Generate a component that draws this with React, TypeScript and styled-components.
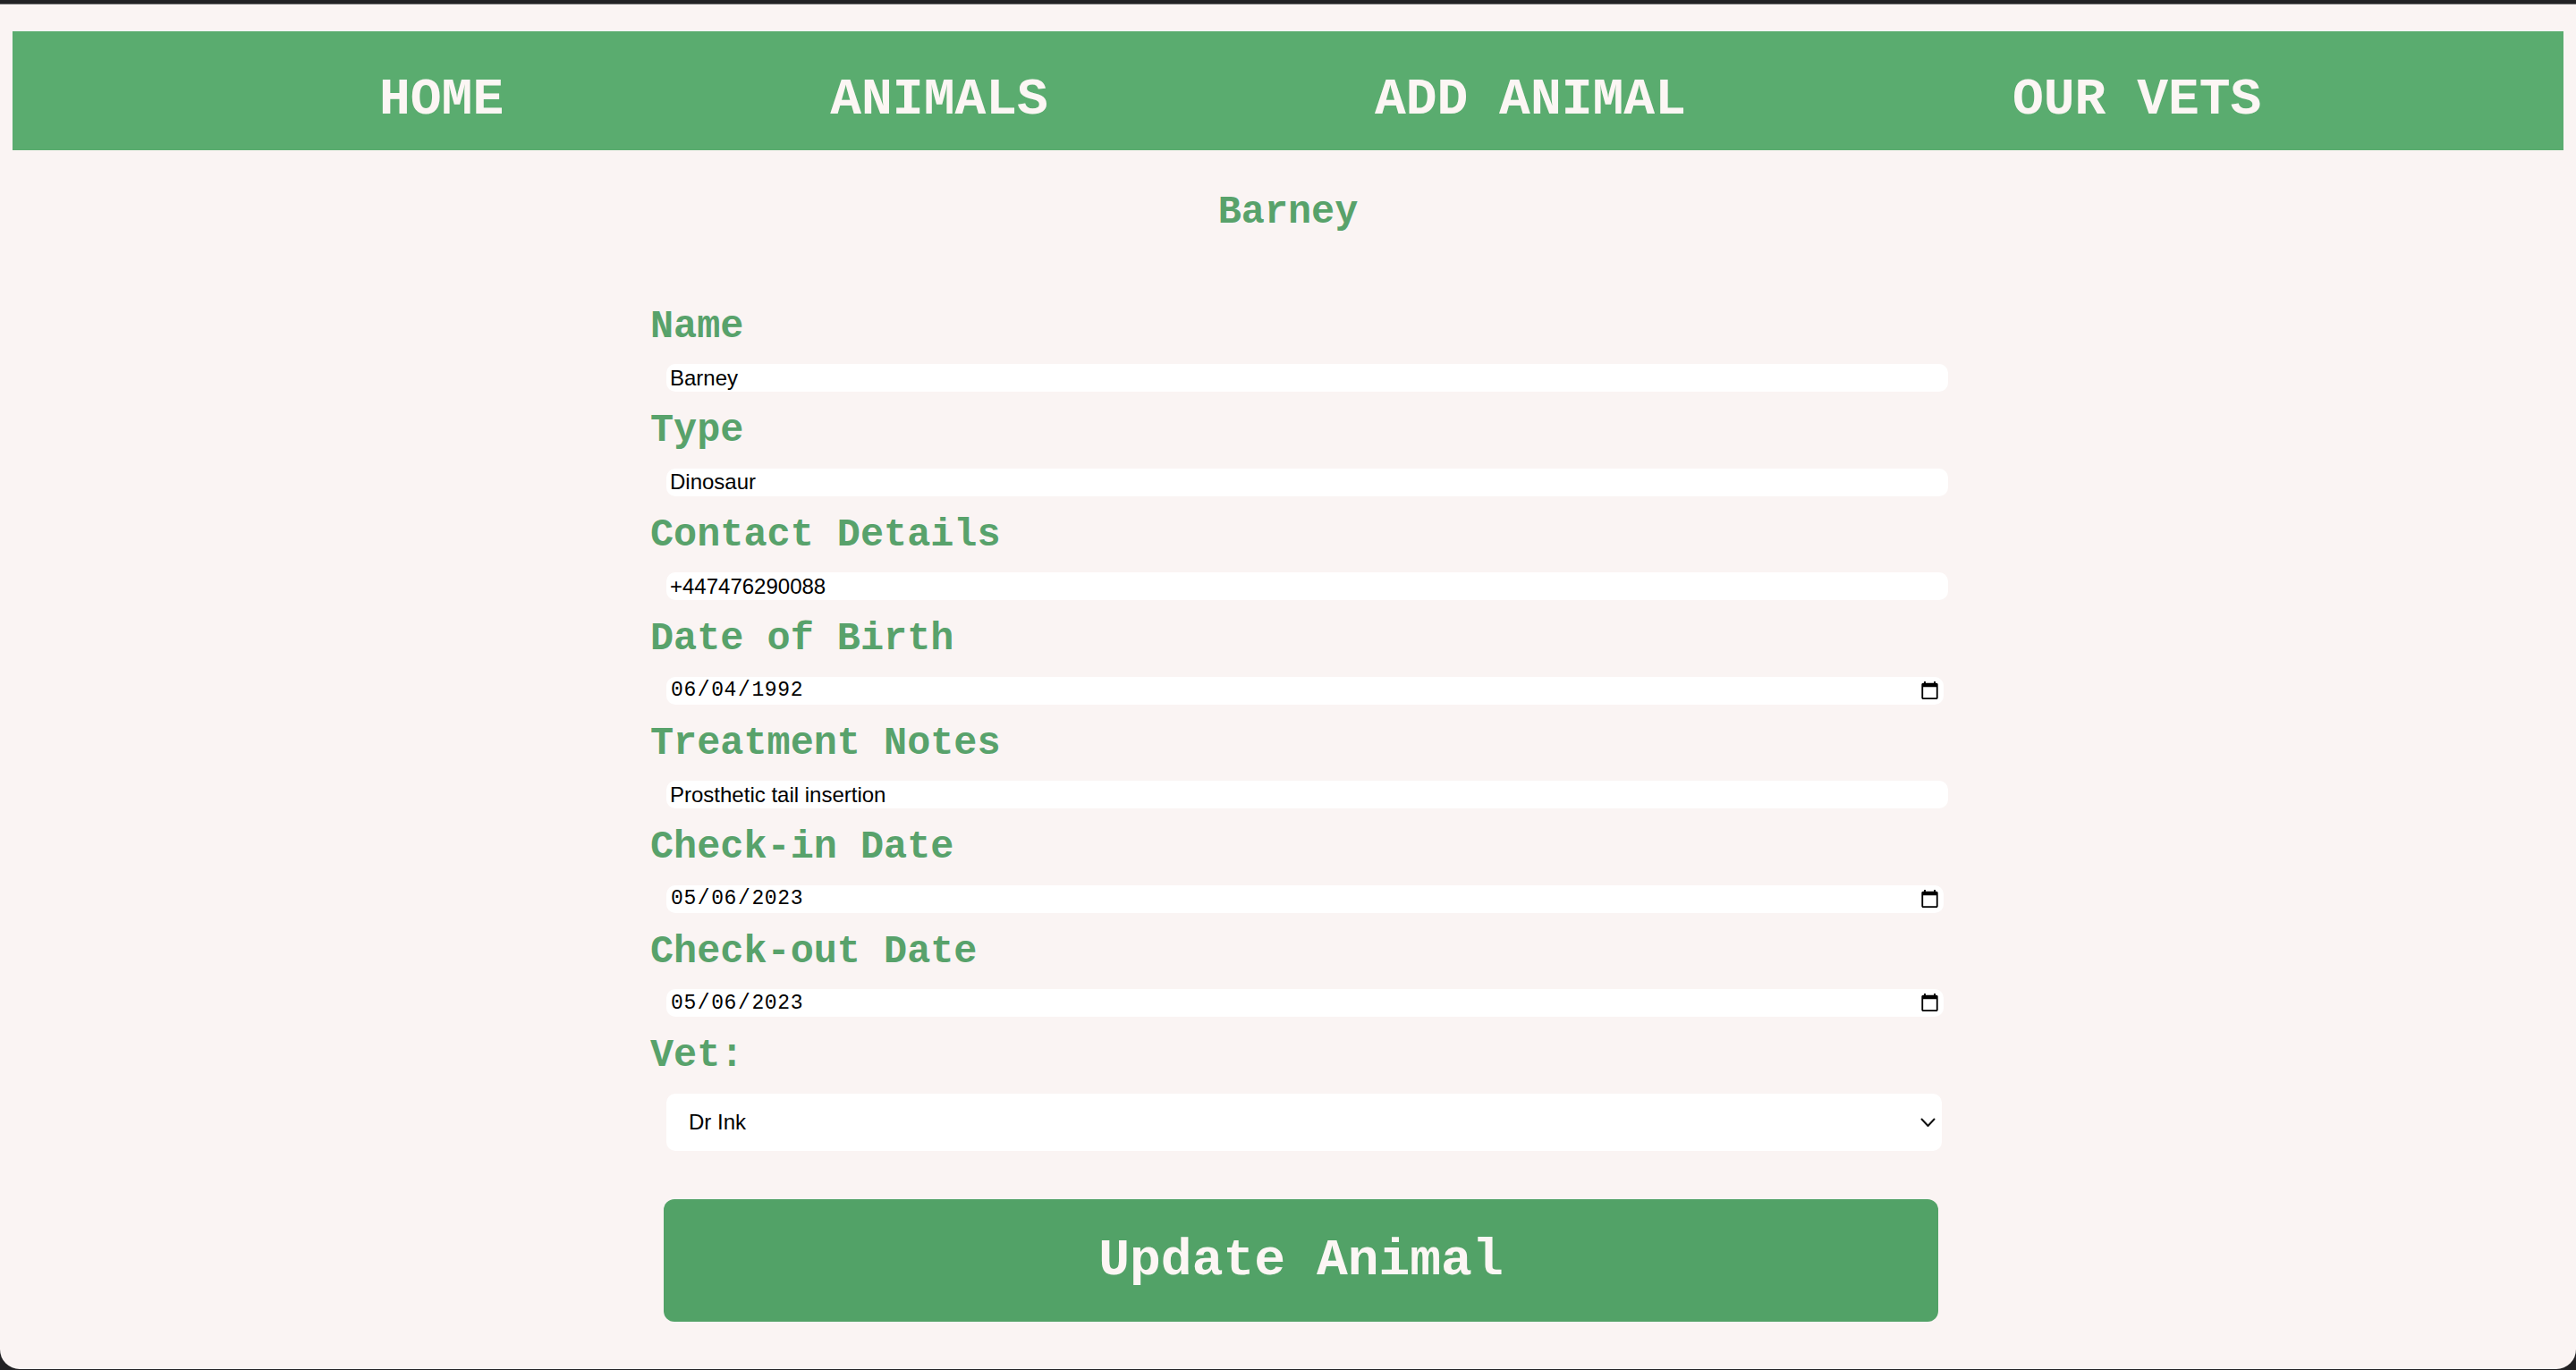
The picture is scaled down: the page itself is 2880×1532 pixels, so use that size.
import React from "react";
import styled, { createGlobalStyle } from "styled-components";

const GlobalStyle = createGlobalStyle`
  html, body {
    margin: 0;
    padding: 0;
    background: #222224;
  }
  * { box-sizing: border-box; }
`;

const Page = styled.div`
  margin-top: 4px;
  border-top: 1px solid #6b6b6b;
  min-height: 1527px;
  background: #faf4f3;
  border-radius: 0 0 22px 22px;
  padding: 30px 14px 0;
  font-family: "Liberation Mono", "Courier New", monospace;
`;

const NavBar = styled.nav`
  background: #5aac6f;
  height: 133px;
`;

const NavList = styled.ul`
  list-style: none;
  margin: 0;
  padding: 44px 0 0 410px;
  display: flex;
  gap: 365px;
`;

const NavLink = styled.a`
  display: block;
  font-family: "Liberation Mono", "Courier New", monospace;
  font-weight: 700;
  font-size: 58px;
  line-height: normal;
  color: #fcf6f4;
  text-decoration: none;
  white-space: nowrap;
`;

const Title = styled.h1`
  margin: 45px 0 0;
  text-align: center;
  font-family: "Liberation Mono", "Courier New", monospace;
  font-weight: 700;
  font-size: 43.5px;
  line-height: 49px;
  color: #58a26b;
`;

const Form = styled.form`
  width: 1426px;
  margin: 77px auto 0;
  display: flex;
  flex-direction: column;
  align-items: flex-start;
`;

const Label = styled.label`
  display: block;
  font-family: "Liberation Mono", "Courier New", monospace;
  font-weight: 700;
  font-size: 43.5px;
  line-height: 49px;
  color: #58a26b;
  padding-top: 1.5px;
  margin-bottom: 17.5px;
`;

const TextInput = styled.input<{ $w: number }>`
  display: block;
  width: ${(p) => p.$w}px;
  height: 31px;
  margin: 0 0 17.5px 18px;
  padding: 0 4px;
  border: none;
  border-radius: 10px;
  background: #ffffff;
  color: #000;
  font-family: "Liberation Sans", Arial, sans-serif;
  font-size: 24px;
  outline: none;
`;

const DateInput = styled(TextInput)`
  font-family: "Liberation Mono", "DejaVu Sans Mono", monospace;
  font-size: 23px;
  letter-spacing: 0.6px;
  padding-right: 2px;
`;

const SelectWrap = styled.div`
  position: relative;
  width: 1426px;
  height: 64px;
  margin-left: 18px;
`;

const Select = styled.select`
  appearance: none;
  -webkit-appearance: none;
  width: 100%;
  height: 100%;
  border: none;
  border-radius: 10px;
  background: #ffffff;
  padding: 0 40px 0 25px;
  font-family: "Liberation Sans", Arial, sans-serif;
  font-size: 24px;
  color: #000;
  outline: none;
`;

const Chevron = styled.svg`
  position: absolute;
  right: 7px;
  top: 27px;
  width: 17px;
  height: 11px;
  pointer-events: none;
`;

const SubmitButton = styled.button`
  display: flex;
  align-items: center;
  justify-content: center;
  width: 1425px;
  height: 137px;
  margin: 54.5px 0 0 15px;
  border: none;
  border-radius: 12px;
  background: #52a267;
  color: #fcf6f4;
  font-family: "Liberation Mono", "Courier New", monospace;
  font-weight: 700;
  font-size: 58px;
  cursor: pointer;
`;

type Field = {
  id: string;
  label: string;
  type: "text" | "date";
  value: string;
};

const fields: Field[] = [
  { id: "name", label: "Name", type: "text", value: "Barney" },
  { id: "type", label: "Type", type: "text", value: "Dinosaur" },
  { id: "contact", label: "Contact Details", type: "text", value: "+447476290088" },
  { id: "dob", label: "Date of Birth", type: "date", value: "1992-06-04" },
  { id: "notes", label: "Treatment Notes", type: "text", value: "Prosthetic tail insertion" },
  { id: "checkin", label: "Check-in Date", type: "date", value: "2023-05-06" },
  { id: "checkout", label: "Check-out Date", type: "date", value: "2023-05-06" },
];

export default function App() {
  return (
    <>
      <GlobalStyle />
      <Page>
        <NavBar>
          <NavList>
            <li><NavLink href="#">HOME</NavLink></li>
            <li><NavLink href="#">ANIMALS</NavLink></li>
            <li><NavLink href="#">ADD ANIMAL</NavLink></li>
            <li><NavLink href="#">OUR VETS</NavLink></li>
          </NavList>
        </NavBar>
        <Title>Barney</Title>
        <Form onSubmit={(e) => e.preventDefault()}>
          {fields.map((f) => (
            <React.Fragment key={f.id}>
              <Label htmlFor={f.id}>{f.label}</Label>
              {f.type === "date" ? (
                <DateInput id={f.id} type="date" defaultValue={f.value} $w={1428} />
              ) : (
                <TextInput id={f.id} type="text" defaultValue={f.value} $w={1433} />
              )}
            </React.Fragment>
          ))}
          <Label htmlFor="vet">Vet:</Label>
          <SelectWrap>
            <Select id="vet" defaultValue="ink">
              <option value="ink">Dr Ink</option>
            </Select>
            <Chevron viewBox="0 0 17 11">
              <path d="M1.5 1.5 L8.5 9 L15.5 1.5" fill="none" stroke="#111" strokeWidth="2" strokeLinecap="round" strokeLinejoin="round" />
            </Chevron>
          </SelectWrap>
          <SubmitButton type="submit">Update Animal</SubmitButton>
        </Form>
      </Page>
    </>
  );
}
